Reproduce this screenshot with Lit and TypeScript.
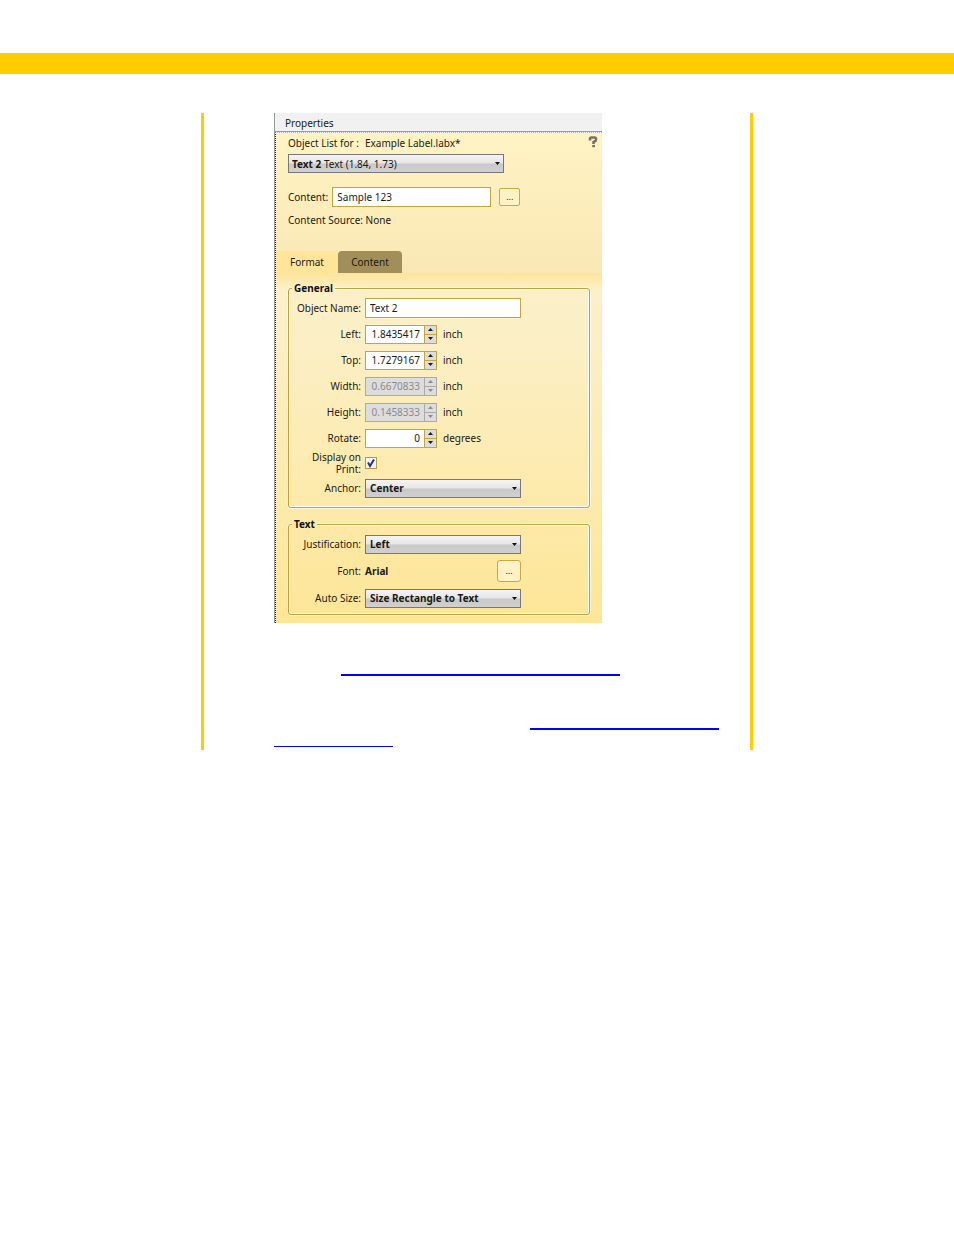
import { LitElement, html, css, svg } from "lit";
import { customElement } from "lit/decorators.js";

interface Measure {
  id: string;
  label: string;
  value: string;
  unit: string;
  locked?: boolean;
}

const MEASURES: Measure[] = [
  { id: "left", label: "Left:", value: "1.8435417", unit: "inch" },
  { id: "top", label: "Top:", value: "1.7279167", unit: "inch" },
  { id: "width", label: "Width:", value: "0.6670833", unit: "inch", locked: true },
  { id: "height", label: "Height:", value: "0.1458333", unit: "inch", locked: true },
  { id: "rotate", label: "Rotate:", value: "0", unit: "degrees" },
];

const arrow = (d: string) =>
  html`<svg class="arrow" viewBox="0 0 5 3" width="5" height="3">${svg`<path d=${d} fill="currentColor" />`}</svg>`;

@customElement("app-root")
export class AppRoot extends LitElement {
  static styles = css`
    :host {
      display: block;
      font: 10px/14px "Noto Sans", "Open Sans", sans-serif;
      color: #1c1a12;
      background: #fff;
    }
    * {
      box-sizing: border-box;
    }
    input,
    select,
    button {
      font: inherit;
      color: inherit;
      margin: 0;
      border-radius: 0;
      outline: none;
    }
    .band {
      height: 21px;
      margin-top: 53px;
      background: #fc0;
    }
    .page {
      max-width: 552px;
      margin: 39px auto 0;
      padding: 0 31px 3px 70px;
      border: solid #fc0;
      border-width: 0 3px;
    }
    .panel {
      max-width: 328px;
      border-left: 1px solid #999;
    }
    .title {
      height: 19px;
      padding: 3px 10px 0;
      background: #f1f1f1;
      border-bottom: 1px solid #a09c90;
    }
    .title h1 {
      margin: 0;
      font: inherit;
    }
    .body {
      border-left: 1px dotted #222;
      border-top: 1px dotted #c9b26a;
    }
    .top {
      height: 140px;
      padding: 3px 4px 0 12px;
      background: linear-gradient(#fff3c4, #f9e8b4);
      display: flex;
      flex-direction: column;
    }
    .line {
      display: flex;
      align-items: center;
    }
    .file {
      gap: 6px;
    }
    .help {
      margin-left: auto;
      width: 10px;
      height: 14px;
      padding: 0;
      border: 0;
      background: none;
      display: flex;
    }
    .combo {
      display: grid;
    }
    .combo > * {
      grid-area: 1 / 1;
    }
    .combo > span,
    .combo > svg {
      pointer-events: none;
      align-self: center;
    }
    .combo > svg {
      justify-self: end;
      margin-right: 4px;
      color: #111;
    }
    .combo > span {
      padding-left: 4px;
    }
    select {
      appearance: none;
      height: 19px;
      padding: 0 12px 0 4px;
      border: 1px solid #777;
      background: linear-gradient(#f4f4f4, #e6e6e6 48%, #c9c9c9 52%, #d0d0d0);
      font-weight: bold;
    }
    .blank {
      color: transparent;
    }
    .object {
      width: 216px;
      margin-top: 4px;
    }
    .content {
      margin-top: 14px;
      gap: 4px;
    }
    .field {
      height: 20px;
      padding: 0 4px;
      border: 1px solid #c5a63c;
      background: #fff;
    }
    .content .field {
      width: 159px;
    }
    .more {
      height: 18px;
      width: 21px;
      padding: 0;
      border: 1px solid #c9a943;
      border-radius: 2px;
      background: #fff2c5;
      font-size: 9px;
    }
    .content .more {
      margin-left: 4px;
    }
    .source {
      margin-top: 6px;
    }
    .tabs {
      display: flex;
      margin: auto 0 0 -12px;
    }
    .tab {
      height: 22px;
      width: 64px;
      padding: 0;
      border: 0;
      border-radius: 4px 4px 0 0;
      background: #a08f58;
    }
    .tab.on {
      width: 62px;
      background: #fee59a;
      border-radius: 0;
    }
    .bottom {
      padding: 8px 11px 7px;
      background: linear-gradient(#fee49a, #fbf0c8 16px, #fbefc6 60px, #fee697);
    }
    fieldset {
      margin: 0;
      padding: 0 0 5px;
      border: 3px solid #c5a63c;
      border-image: url("data:image/svg+xml,%3Csvg xmlns='http://www.w3.org/2000/svg' width='20' height='20' fill='none'%3E%3Crect x='.5' y='.5' width='19' height='19' rx='3.500' stroke='%23fff' stroke-opacity='.5'/%3E%3Crect x='2.500' y='2.500' width='15' height='15' rx='1.500' stroke='%23fff'/%3E%3Crect x='1.500' y='1.500' width='17' height='17' rx='2.500' stroke='%23c0a040'/%3E%3C/svg%3E") 5 / 5px stretch;
      min-width: 0;
    }
    legend {
      margin-left: 2px;
      padding: 0 2px;
      font-weight: bold;
      color: #111;
    }
    .rows {
      display: grid;
      grid-template-columns: 71px 156px 1fr;
      column-gap: 4px;
      align-items: center;
    }
    .row {
      display: contents;
    }
    .name {
      grid-column: 1;
      text-align: right;
      line-height: 12px;
    }
    .value {
      grid-column: 2;
      height: 26px;
      display: flex;
      align-items: center;
      justify-content: space-between;
    }
    .value > .field,
    .value > .combo {
      width: 100%;
    }
    .spin {
      display: grid;
      grid-template-columns: 1fr 11px;
      grid-template-rows: 1fr 1fr;
      width: 72px;
      height: 19px;
      border: 1px solid #c5a63c;
      background: #fff;
    }
    .spin input {
      grid-row: 1 / 3;
      width: 100%;
      min-width: 0;
      padding: 0 4px 0 0;
      border: 0;
      border-right: 1px solid #c5a63c;
      background: none;
      text-align: right;
    }
    .step {
      padding: 0;
      border: 0;
      background: #ddd;
      display: grid;
      place-items: center;
    }
    .step + .step {
      border-top: 1px solid #c5a63c;
    }
    .locked,
    .locked input,
    .locked .step + .step {
      border-color: #aaa;
      color: #8c8c8c;
    }
    .locked,
    .locked .step {
      background: #ddd;
    }
    .unit {
      flex: 1;
      padding-left: 6px;
    }
    .print .value {
      height: 24px;
    }
    .tick {
      display: grid;
    }
    .tick > * {
      grid-area: 1 / 1;
    }
    .tick input {
      appearance: none;
      width: 12px;
      height: 12px;
      border: 1px solid #b99a3c;
      background: #f4f4f4;
    }
    .tick svg {
      pointer-events: none;
    }
    .text {
      margin-top: 8px;
      padding-bottom: 2px;
    }
    .font .value {
      height: 28px;
    }
    .font .more {
      width: 24px;
      height: 22px;
      border-radius: 3px;
    }
    .links {
      padding-top: 51px;
    }
    .links a {
      display: block;
      border-bottom: 2px solid #00f;
    }
    .first {
      width: 279px;
      margin-left: 67px;
    }
    .second {
      width: 189px;
      margin: 52px 0 0 256px;
    }
    .links .third {
      width: 119px;
      margin-top: 16px;
      border-bottom-width: 1px;
    }
  `;

  private down() {
    return arrow("M0 0h5L2.500 3z");
  }

  private choice(id: string, value: string) {
    return html`<div class="combo">
      <select id=${id}><option>${value}</option></select>
      ${this.down()}
    </div>`;
  }

  private measure(m: Measure) {
    return html`<div class="row">
      <label class="name" for=${m.id}>${m.label}</label>
      <div class="value">
        <div class="spin ${m.locked ? "locked" : ""}">
          <input id=${m.id} .value=${m.value} ?disabled=${m.locked} />
          <button class="step" ?disabled=${m.locked}>${arrow("M0 3h5L2.500 0z")}</button>
          <button class="step" ?disabled=${m.locked}>${this.down()}</button>
        </div>
        <span class="unit">${m.unit}</span>
      </div>
    </div>`;
  }

  render() {
    return html`
      <div class="band"></div>
      <main class="page">
        <section class="panel">
          <header class="title"><h1>Properties</h1></header>
          <div class="body">
            <div class="top">
              <div class="line file">
                <label for="object">Object List for :</label>
                <span>Example Label.labx*</span>
                <button class="help">
                  <svg viewBox="0 0 10 12" width="10" height="12">
                    <path d="M2 4.500V3Q2 1.500 3.500 1.500h3Q8 1.500 8 3v.5Q8 5 6.500 5.500L5.500 6v2" fill="none" stroke="#77736a" stroke-width="2.600" />
                    <path d="M4.200 9h2.800v2.200H4.200z" fill="#77736a" />
                  </svg>
                </button>
              </div>
              <div class="combo object">
                <select id="object" class="blank"><option></option></select>
                <span><b>Text 2</b> Text (1.84, 1.73)</span>
                ${this.down()}
              </div>
              <div class="line content">
                <label for="content">Content:</label>
                <input id="content" class="field" .value=${"Sample 123"} />
                <button class="more">...</button>
              </div>
              <div class="source">Content Source: None</div>
              <div class="tabs">
                <button class="tab on">Format</button>
                <button class="tab">Content</button>
              </div>
            </div>
            <div class="bottom">
              <fieldset>
                <legend>General</legend>
                <div class="rows">
                  <div class="row">
                    <label class="name" for="name">Object Name:</label>
                    <div class="value"><input id="name" class="field" .value=${"Text 2"} /></div>
                  </div>
                  ${MEASURES.map((m) => this.measure(m))}
                  <div class="row print">
                    <label class="name" for="print">Display on Print:</label>
                    <div class="value">
                      <div class="tick">
                        <input id="print" type="checkbox" checked />
                        <svg viewBox="0 0 12 12" width="12" height="12">
                          <path d="M3 5.500L5 9 9 2.500" fill="none" stroke="#2b2f86" stroke-width="2" />
                        </svg>
                      </div>
                    </div>
                  </div>
                  <div class="row">
                    <label class="name" for="anchor">Anchor:</label>
                    <div class="value">${this.choice("anchor", "Center")}</div>
                  </div>
                </div>
              </fieldset>
              <fieldset class="text">
                <legend>Text</legend>
                <div class="rows">
                  <div class="row">
                    <label class="name" for="justify">Justification:</label>
                    <div class="value">${this.choice("justify", "Left")}</div>
                  </div>
                  <div class="row font">
                    <label class="name" for="font">Font:</label>
                    <div class="value"><b>Arial</b><button id="font" class="more">...</button></div>
                  </div>
                  <div class="row">
                    <label class="name" for="size">Auto Size:</label>
                    <div class="value">${this.choice("size", "Size Rectangle to Text")}</div>
                  </div>
                </div>
              </fieldset>
            </div>
          </div>
        </section>
        <nav class="links">
          <a class="first" href="#"></a>
          <a class="second" href="#"></a>
          <a class="third" href="#"></a>
        </nav>
      </main>
    `;
  }
}
